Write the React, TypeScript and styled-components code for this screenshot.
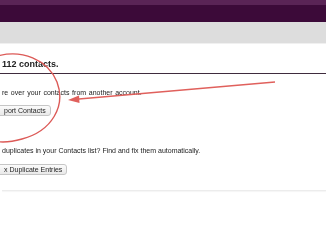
import React from 'react';
import styled, { createGlobalStyle } from 'styled-components';

const GlobalStyle = createGlobalStyle`
  html, body {
    margin: 0;
    padding: 0;
    background: #ffffff;
    overflow: hidden;
  }
  body {
    font-family: "Liberation Sans", Arial, sans-serif;
  }
`;

const Page = styled.div`
  position: relative;
  width: 326px;
  height: 245px;
  overflow: hidden;
  background: #ffffff;
`;

const TopBar = styled.div`
  box-sizing: border-box;
  height: 22px;
  background: #3c0a39;
  border-top: 5px solid #5a2456;
`;

const SubBar = styled.div`
  height: 21px;
  background: #dddddd;
  border-bottom: 1px solid #f0f0f0;
`;

const Main = styled.div`
  padding-left: 2px;
  will-change: transform;
`;

const Heading = styled.h2`
  margin: 15px 0 0 -2px;
  padding: 0 0 3px 2px;
  font-size: 9px;
  line-height: 11px;
  font-weight: bold;
  color: #222222;
  border-bottom: 1px solid #3f2c3e;
`;

const Section = styled.div<{ $top: number }>`
  margin-top: ${p => p.$top}px;
`;

const Text = styled.p<{ $space?: number }>`
  margin: 0;
  font-size: 7px;
  line-height: 11px;
  word-spacing: ${p => p.$space ?? 0}px;
  color: #222222;
`;

const Button = styled.button<{ $shift: number; $gap: number }>`
  display: block;
  box-sizing: border-box;
  height: 11px;
  margin: ${p => p.$gap}px 0 0 ${p => -p.$shift}px;
  padding: 0 4px 0 ${p => p.$shift + 1}px;
  font-family: "Liberation Sans", Arial, sans-serif;
  font-size: 7px;
  line-height: 9px;
  color: #1e1e1e;
  background: linear-gradient(#fbfbfb, #e9e9e9);
  border: 1px solid #c6c6c6;
  border-radius: 3px;
`;

const Divider = styled.div`
  margin-top: 15px;
  height: 1px;
  background: #ececec;
  box-shadow: 0 1px 1px #f4f4f4;
`;

const Markup = styled.svg`
  position: absolute;
  left: 0;
  top: 0;
  pointer-events: none;
`;

const App = () => {
  return (
    <Page>
      <GlobalStyle />
      <TopBar />
      <SubBar />
      <Main>
        <Heading>112 contacts.</Heading>
        <Section $top={13}>
          <Text $space={0.7}>re over your contacts from another account.</Text>
          <Button $shift={6} $gap={7}>port Contacts</Button>
        </Section>
        <Section $top={29}>
          <Text>duplicates in your Contacts list? Find and fix them automatically.</Text>
          <Button $shift={7} $gap={8}>x Duplicate Entries</Button>
        </Section>
        <Divider />
      </Main>
      {/* red hand-drawn annotation */}
      <Markup width="326" height="245" viewBox="0 0 326 245">
        <path
          d="M -6 57 C 22 48, 48 60, 57 82 C 66 106, 52 131, 22 139 C 8 143, -4 142, -10 140"
          fill="none"
          stroke="#dc5a57"
          strokeWidth="1.4"
        />
        <line x1="76" y1="99.3" x2="275" y2="82" stroke="#e0605c" strokeWidth="1.4" />
        <polygon points="68,100 79,95.5 79.5,103" fill="#e0605c" />
      </Markup>
    </Page>
  );
};

export default App;
